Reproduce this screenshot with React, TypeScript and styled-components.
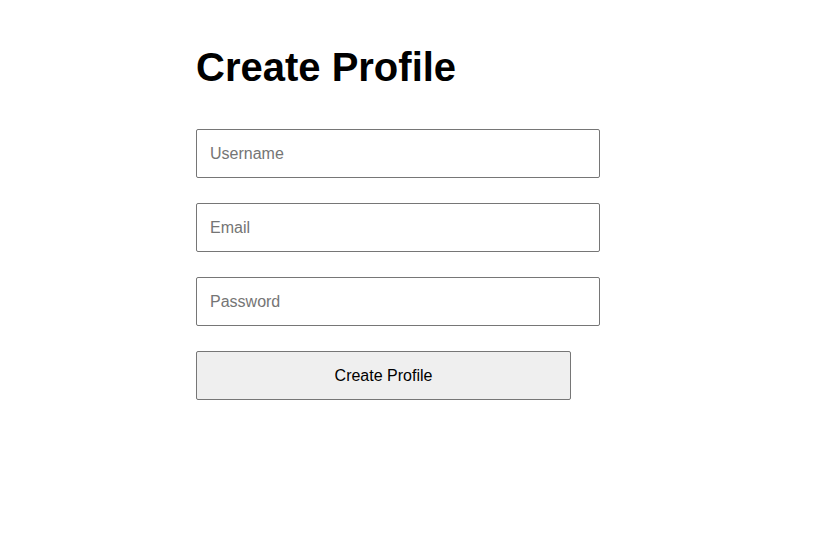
import React from "react";
import styled, { createGlobalStyle } from "styled-components";

const Global = createGlobalStyle`
  html, body { margin: 0; padding: 0; background: #ffffff; }
  body { font-family: "Liberation Sans", Arial, sans-serif; color: #000; }
`;

const Page = styled.div`
  display: flex;
  justify-content: flex-start;
  padding: 44px 0 0 196px;
`;

const Form = styled.form`
  display: flex;
  flex-direction: column;
  align-items: flex-start;
  gap: 25px;
`;

const Title = styled.h1`
  margin: 0 0 14px 0;
  font-size: 40px;
  font-weight: 700;
  line-height: 46px;
  font-family: "Liberation Sans", Arial, sans-serif;
`;

const Field = styled.input`
  box-sizing: border-box;
  width: 404px;
  height: 49px;
  padding: 0 13px;
  border: 1px solid #767676;
  border-radius: 2px;
  font-family: "Liberation Sans", Arial, sans-serif;
  font-size: 16px;
  color: #000;
  background: #fff;
  outline: none;
  &::placeholder { color: #757575; }
`;

const Submit = styled.button`
  box-sizing: border-box;
  width: 375px;
  height: 49px;
  border: 1px solid #767676;
  border-radius: 2px;
  background: #efefef;
  font-family: "Liberation Sans", Arial, sans-serif;
  font-size: 16px;
  color: #000;
  cursor: pointer;
`;

export default function App() {
  return (
    <>
      <Global />
      <Page>
        <Form onSubmit={(e) => e.preventDefault()}>
          <Title>Create Profile</Title>
          <Field type="text" placeholder="Username" />
          <Field type="email" placeholder="Email" />
          <Field type="password" placeholder="Password" />
          <Submit type="submit">Create Profile</Submit>
        </Form>
      </Page>
    </>
  );
}
